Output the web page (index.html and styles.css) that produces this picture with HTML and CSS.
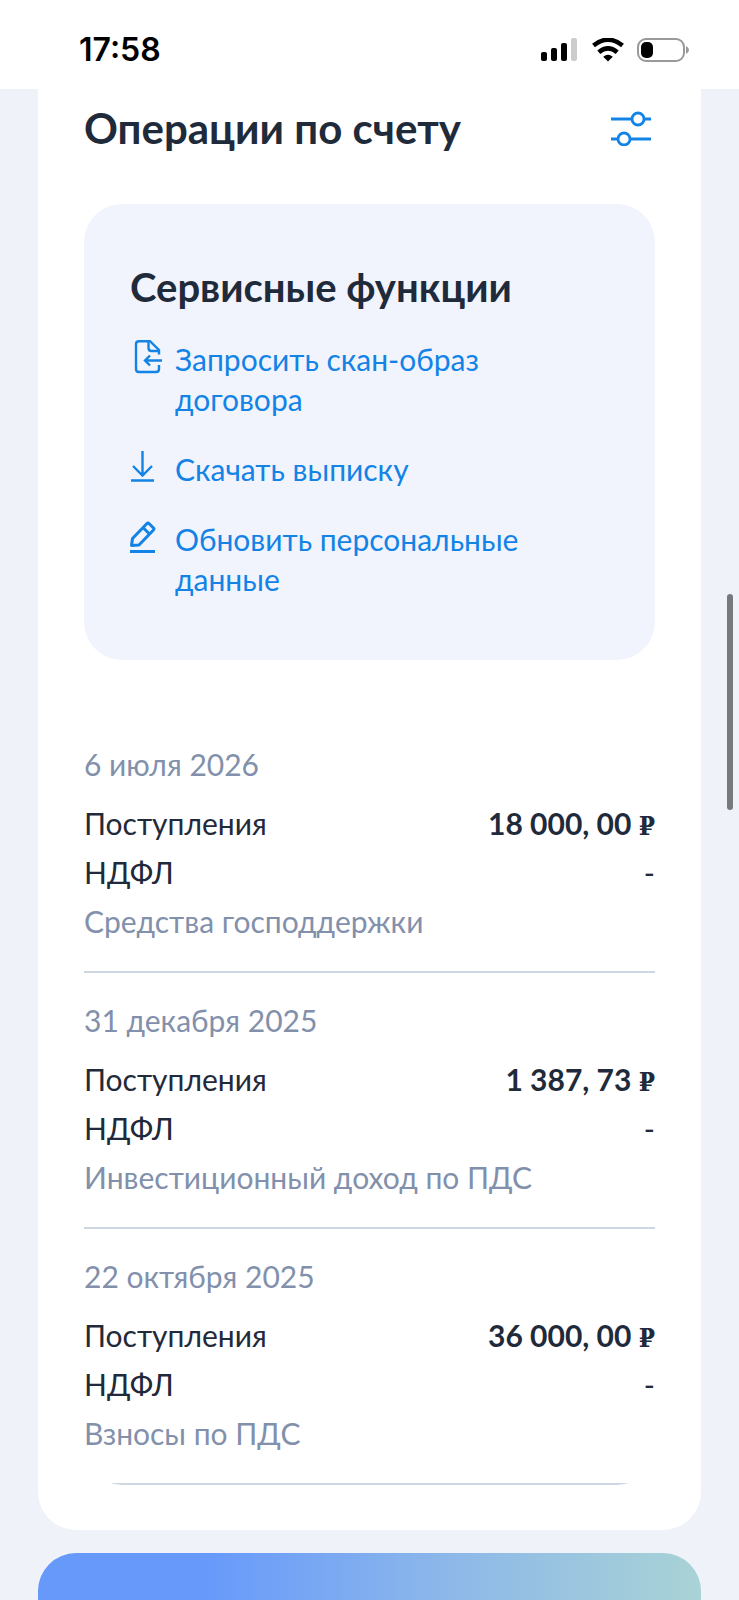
FILE: index.html
```html
<!DOCTYPE html>
<html lang="ru">
<head>
  <meta charset="UTF-8" />
  <meta name="viewport" content="width=device-width, initial-scale=1.0"/>
  <title>Операции по счету</title>
  <link rel="stylesheet" href="styles.css">
</head>
<body>
  <header class="status">
    <span class="time">17:58</span>
    <div class="status-icons">
      <svg width="38" height="24" viewBox="0 0 38 24">
        <rect x="0" y="14" width="6" height="9" rx="2"/>
        <rect x="10" y="10" width="6" height="13" rx="2"/>
        <rect x="20" y="5" width="6" height="18" rx="2"/>
        <rect x="30" y="0" width="6" height="23" rx="2" fill="#ccc"/>
      </svg>
      <svg width="32" height="24" viewBox="0 0 32 24">
        <path d="M1.500 7.500Q16 -4 30.500 7.500" fill="none" stroke="#000" stroke-width="4.6"/>
        <path d="M6.800 14.200Q16 6.500 25.200 14.200" fill="none" stroke="#000" stroke-width="4.6"/>
        <path d="M11.200 18.800Q16 14.800 20.800 18.800L16 23.600Z"/>
      </svg>
      <svg width="52" height="24" viewBox="0 0 52 24">
        <rect x="1" y="1" width="46" height="22" rx="8" fill="#fff" stroke="#999" stroke-width="2"/>
        <rect x="4" y="4" width="12" height="16" rx="5"/>
        <path d="M49 8Q52 9.500 52 12Q52 14.500 49 16Z" fill="#999"/>
      </svg>
    </div>
  </header>

  <main class="page">
    <section class="card">
      <div class="card-head">
        <h1>Операции по счету</h1>
        <button class="filter" type="button" aria-label="Фильтр">
          <svg width="40" height="36" viewBox="0 0 40 36" fill="none" stroke="#1383e6" stroke-width="2.8">
            <path d="M0 9H20.500M33.500 9H40"/>
            <circle cx="27" cy="9" r="6"/>
            <path d="M0 29H6.500M19.500 29H40"/>
            <circle cx="13" cy="29" r="6"/>
          </svg>
        </button>
      </div>

      <div class="service">
        <h2>Сервисные функции</h2>
        <ul class="links">
          <li>
            <a href="#">
              <svg width="35" height="36" viewBox="0 -1 35 36" fill="none" stroke="#1383e6" stroke-width="2.4">
                <path d="M29 25V29Q29 32 26 32H9Q6 32 6 29V4Q6 1.200 9 1.200H20L29 10V14.500"/>
                <path d="M18.500 1.200V8Q18.500 11 21.500 11H29"/>
                <path d="M32 20.500H15M20 15.500L15 20.500L20 25.500"/>
              </svg>
              <span>Запросить скан-образ договора</span>
            </a>
          </li>
          <li>
            <a href="#">
              <svg width="35" height="36" viewBox="0 -1 35 36" fill="none" stroke="#1383e6" stroke-width="2.4">
                <path d="M12.500 1V25M3 16L12.500 25.500L22 16M1 30.500H24"/>
              </svg>
              <span>Скачать выписку</span>
            </a>
          </li>
          <li>
            <a href="#">
              <svg width="35" height="36" viewBox="0 -1 35 36" fill="none" stroke="#1383e6" stroke-width="3" stroke-linejoin="round">
                <path d="M1.500 25.500L2.500 18.500L17 3.500Q18 2.500 19 3.500L23.500 8Q24.500 9 23.500 10L9 25Z"/>
                <path d="M13 7.500L19.500 14M0 31.500H25"/>
              </svg>
              <span>Обновить персональные данные</span>
            </a>
          </li>
        </ul>
      </div>

      <div class="operations">
        <article class="operation">
          <p class="date">6 июля 2026</p>
          <p class="row"><span>Поступления</span><b>18 000, 00 <span class="rub">₽</span></b></p>
          <p class="row"><span>НДФЛ</span><span>-</span></p>
          <p class="note">Средства господдержки</p>
        </article>
        <article class="operation">
          <p class="date">31 декабря 2025</p>
          <p class="row"><span>Поступления</span><b>1 387, 73 <span class="rub">₽</span></b></p>
          <p class="row"><span>НДФЛ</span><span>-</span></p>
          <p class="note">Инвестиционный доход по ПДС</p>
        </article>
        <article class="operation">
          <p class="date">22 октября 2025</p>
          <p class="row"><span>Поступления</span><b>36 000, 00 <span class="rub">₽</span></b></p>
          <p class="row"><span>НДФЛ</span><span>-</span></p>
          <p class="note">Взносы по ПДС</p>
        </article>
      </div>
    </section>

    <section class="banner"></section>
  </main>

  <div class="scroll-thumb"></div>
</body>
</html>
```

FILE: styles.css
```css
* {
  box-sizing: border-box;
}

body {
  position: relative;
  display: flex;
  flex-direction: column;
  min-height: 100vh;
  margin: 0;
  background: #eff3f9;
  color: #1f2a3a;
  font-family: Lato, "Open Sans", sans-serif;
  font-size: 30px;
  line-height: 40px;
}

h1, h2, p, ul {
  margin: 0;
  padding: 0;
}

svg {
  display: block;
  flex-shrink: 0;
}

/* строка состояния */
.status {
  display: flex;
  align-items: center;
  justify-content: space-between;
  padding: 30px 50px 19px 79px;
  background: white;
  color: black;
}

.time {
  font-family: Inter, sans-serif;
  font-size: 32px;
  font-weight: 600;
}

.status-icons {
  display: flex;
  gap: 13px;
}

.page {
  display: flex;
  flex-direction: column;
  flex: 1;
  gap: 23px;
  padding: 0 38px;
}

.card {
  padding: 14px 46px 45px;
  background: white;
  border-radius: 0 0 38px 38px;
}

.card-head {
  display: flex;
  align-items: center;
  justify-content: space-between;
  margin-bottom: 51px;
}

h1, h2 {
  font-size: 42px;
  line-height: 50px;
  font-weight: bold;
}

h2 {
  font-size: 40px;
}

.filter {
  margin-right: 4px;
  padding: 0;
  border: none;
  background: none;
  cursor: pointer;
}

.service {
  padding: 58px 46px 61px;
  background: #f1f4fc;
  border-radius: 38px;
}

.links {
  display: flex;
  flex-direction: column;
  gap: 30px;
  margin-top: 27px;
  list-style: none;
}

.links a {
  display: flex;
  gap: 10px;
  color: #1383e6;
  text-decoration: none;
}

.operations {
  margin-top: 57px;
  overflow: hidden;
  border-radius: 38px;
}

.operation {
  padding: 23px 0 25px;
  border-bottom: 2px solid #cdd7e2;
  line-height: 49px;
}

.date {
  margin-bottom: 10px;
}

.date, .note {
  color: #8290ab;
}

.row {
  display: flex;
  justify-content: space-between;
}

.rub {
  font-family: "DejaVu Serif Condensed", "DejaVu Serif", serif;
  font-size: 26px;
  font-weight: bold;
  line-height: 40px;
}

.banner {
  flex: 1;
  background: linear-gradient(90deg, #6799fb 25%, #8bb6ea 60%, #a9d3d5);
  border-radius: 38px 38px 0 0;
}

.scroll-thumb {
  position: absolute;
  top: 594px;
  right: 6px;
  width: 6px;
  height: 216px;
  background: #77797d;
  border-radius: 3px;
}
```
